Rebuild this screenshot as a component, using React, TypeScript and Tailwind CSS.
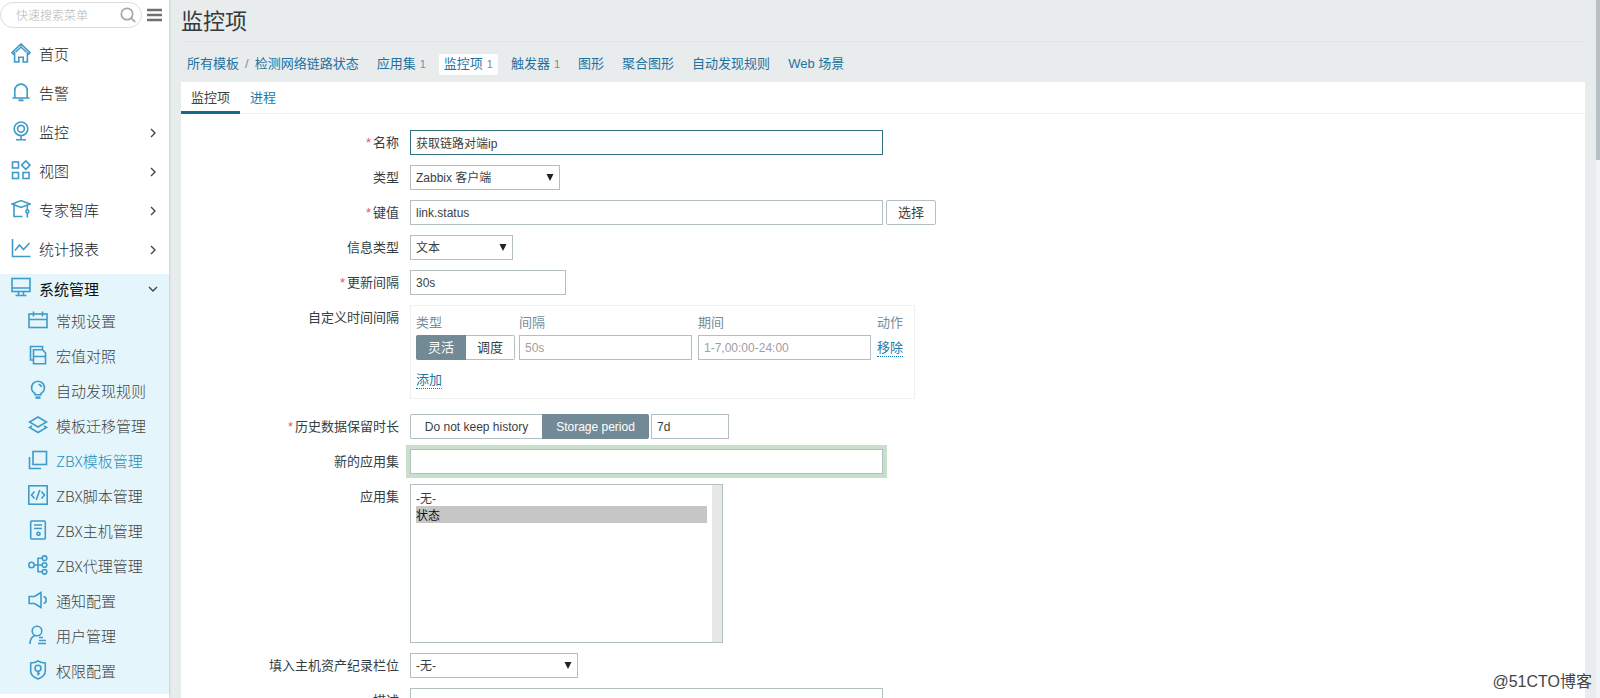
import React from "react";

type NavItem = {
  label: string;
  icon: React.ReactNode;
  expandable?: boolean;
  active?: boolean;
};

type TabItem = {
  label: string;
  count?: number;
  selected?: boolean;
};

// All the sidebar drawings share a 20x20 grid and the same stroke
const Icon = ({ children }: { children: React.ReactNode }) => (
  <svg
    viewBox="0 0 20 20"
    className="mb-1 h-5 w-5 shrink-0 text-[#3f9bc8]"
    fill="none"
    stroke="currentColor"
    strokeWidth="1.6"
    aria-hidden="true"
  >
    {children}
  </svg>
);

const mainItems: NavItem[] = [
  {
    label: "首页",
    icon: (
      <Icon>
        <path d="M1 9.6 10 1l9 8.6-1.3 1.4L16.4 9.8V19h-4.2v-4.800H7.800V19H3.600V9.800L2.300 11z" />
        <path d="M4.800 9 10 4l5.200 5" />
      </Icon>
    ),
  },
  {
    label: "告警",
    icon: (
      <Icon>
        <path d="M1.500 16h17M3.800 16V8.300a6.200 6.200 0 0 1 12.400 0V16" />
        <path d="M7.500 18.300h5" strokeWidth="2" />
      </Icon>
    ),
  },
  {
    label: "监控",
    expandable: true,
    icon: (
      <Icon>
        <circle cx="10" cy="7.800" r="6.800" />
        <circle cx="10" cy="7.800" r="3.400" />
        <path d="M10 14.600V18.500M5 18.700h10" />
      </Icon>
    ),
  },
  {
    label: "视图",
    expandable: true,
    icon: (
      <Icon>
        <rect x="1.500" y="2" width="6" height="6" />
        <path d="M14.800 .9 19 5.100l-4.200 4.200-4.200-4.200z" />
        <rect x="1.500" y="12.500" width="6" height="6" />
        <rect x="12" y="12.500" width="6" height="6" />
      </Icon>
    ),
  },
  {
    label: "专家智库",
    expandable: true,
    icon: (
      <Icon>
        <path d="M1.200 5 10 1.500 18.800 5 10 8.500zM3 6v11.500h8.500M16.300 6v5" />
        <circle cx="16.300" cy="12.500" r="1.500" />
        <path d="M16.300 14v4.500" />
      </Icon>
    ),
  },
  {
    label: "统计报表",
    expandable: true,
    icon: (
      <Icon>
        <path d="M1.500 1v17.500h18" />
        <path d="M4 12.500l4.500-5.500 4 4.500 6-6.500" />
      </Icon>
    ),
  },
];

const systemItems: NavItem[] = [
  {
    label: "常规设置",
    icon: (
      <Icon>
        <rect x="1" y="4" width="18" height="13.500" />
        <path d="M1 9.500h18M5.500 1.500v5M14.500 1.500v5" />
      </Icon>
    ),
  },
  {
    label: "宏值对照",
    icon: (
      <Icon>
        <path d="M5.500 15H2.500V1.500h12v3" />
        <path d="M5.500 4.800h9l3 3v11h-12zM5.500 11.500h12" />
      </Icon>
    ),
  },
  {
    label: "自动发现规则",
    icon: (
      <Icon>
        <path d="M7 14.800v-1.300a6.500 6.500 0 1 1 6 0v1.300z" />
        <path d="M7.500 17.600h5" strokeWidth="2.400" />
        <path d="M10.500 4.200a3.500 3.500 0 0 1 3 3" />
      </Icon>
    ),
  },
  {
    label: "模板迁移管理",
    icon: (
      <Icon>
        <path d="M10 2l8.500 5-8.500 5-8.500-5z" />
        <path d="M4 11l-2.500 1.500L10 17.500l8.500-5L16 11" />
      </Icon>
    ),
  },
  {
    label: "ZBX模板管理",
    active: true,
    icon: (
      <Icon>
        <rect x="5" y="1.500" width="13.500" height="13" />
        <path d="M1.500 7v11.500H13" />
      </Icon>
    ),
  },
  {
    label: "ZBX脚本管理",
    icon: (
      <Icon>
        <rect x=".8" y=".8" width="18.400" height="18.400" />
        <path d="M6.500 6.500 3.500 10l3 3.500M13.500 6.500l3 3.500-3 3.500M11.800 5l-3.600 10" />
      </Icon>
    ),
  },
  {
    label: "ZBX主机管理",
    icon: (
      <Icon>
        <rect x="2.700" y="1" width="14.600" height="18" rx="1" />
        <path d="M6 5h8M6 8.500h8" />
        <circle cx="10.500" cy="13.800" r="1.600" />
      </Icon>
    ),
  },
  {
    label: "ZBX代理管理",
    icon: (
      <Icon>
        <circle cx="3.500" cy="10" r="2.700" />
        <circle cx="16.500" cy="3.200" r="2.300" />
        <circle cx="16.500" cy="10" r="2.300" />
        <circle cx="16.500" cy="16.800" r="2.300" />
        <path d="M6.200 10h8M14.200 3.200H10v13.600h4.200" />
      </Icon>
    ),
  },
  {
    label: "通知配置",
    icon: (
      <Icon>
        <path d="M1.200 6.500h5.300L13 2.500v15l-6.500-4H1.200z" />
        <path d="M15.500 6.500c3.500.5 3.500 6.500 0 7" />
      </Icon>
    ),
  },
  {
    label: "用户管理",
    icon: (
      <Icon>
        <circle cx="9" cy="6" r="4.800" />
        <path d="M2 19c0-4.500 2-7.500 5-8.500M11 12.500h4M11 15.500h7M10 18.500h8" />
      </Icon>
    ),
  },
  {
    label: "权限配置",
    icon: (
      <Icon>
        <path d="M10 1c2.500 1.500 5 2 7.300 2v8c0 4-3.300 6.500-7.300 8-4-1.500-7.300-4-7.300-8V3C5 3 7.500 2.500 10 1z" />
        <circle cx="10" cy="8.300" r="3" />
        <path d="M10 11.300v4.200M10 13.500h2" />
      </Icon>
    ),
  },
];

const templateTabs: TabItem[] = [
  { label: "应用集", count: 1 },
  { label: "监控项", count: 1, selected: true },
  { label: "触发器", count: 1 },
  { label: "图形" },
  { label: "聚合图形" },
  { label: "自动发现规则" },
  { label: "Web 场景" },
];

const fieldClass =
  "block h-[25px] border border-[#b4bfc3] bg-white px-[5px] text-xs text-[#3a3f42] outline-none placeholder:text-[#a0a0a0]";

const Chevron = ({ down = false }: { down?: boolean }) => (
  <svg viewBox="0 0 10 10" className="ml-auto h-2.5 w-2.5" fill="none" stroke="#444" strokeWidth="1.4" aria-hidden="true">
    <path d={down ? "M1 3l4 4 4-4" : "M3 1l4 4-4 4"} />
  </svg>
);

const Sidebar = () => (
  <aside className="z-10 flex w-[169px] shrink-0 flex-col bg-white font-['Noto_Sans_CJK_SC',sans-serif] text-[15px] font-light shadow-[0_0_3px_#b5bfc3]">
    <div className="flex h-[30px] items-center gap-[5px]">
      <div className="flex h-[26px] w-[142px] items-center rounded-full border border-[#dcdcdc] pl-[15px] pr-[5px]">
        <input
          type="text"
          aria-label="快速搜索菜单"
          placeholder="快速搜索菜单"
          className="w-0 flex-1 text-xs outline-none placeholder:text-[#b5b5b5]"
        />
        <svg viewBox="0 0 16 16" className="h-4 w-4" fill="none" stroke="#a8a8a8" strokeWidth="1.700" aria-hidden="true">
          <circle cx="7" cy="7" r="5.700" />
          <path d="M11.200 11.200l4 4" />
        </svg>
      </div>
      <button type="button" aria-label="折叠菜单">
        <svg viewBox="0 0 16 14" className="h-3.5 w-4" stroke="#707070" strokeWidth="2.400" aria-hidden="true">
          <path d="M0 2h15M0 7h15M0 12h15" />
        </svg>
      </button>
    </div>

    <nav className="pt-[5px]">
      {mainItems.map((item) => (
        <a key={item.label} href="#" className="flex h-[39px] items-center gap-2 pl-[11px] pr-[11px] text-[#222]">
          {item.icon}
          {item.label}
          {item.expandable && <Chevron />}
        </a>
      ))}
      <div className="mt-[5px] bg-[#e4f5fc] pb-[5px]">
        <a href="#" className="flex h-[30px] items-center gap-2 pl-[11px] pr-[11px] font-normal text-[#111]">
          <Icon>
            <rect x="1" y="1.500" width="18" height="13" />
            <path d="M1 11h18M7.500 14.500v3.500M12.500 14.500v3.500M4.500 18.500h11" />
          </Icon>
          系统管理
          <Chevron down />
        </a>
        {systemItems.map((item) => (
          <a
            key={item.label}
            href="#"
            className={`flex h-[35px] items-center gap-2 pl-7 ${item.active ? "text-[#1f8fb8]" : "text-[#444]"}`}
          >
            {item.icon}
            {item.label}
          </a>
        ))}
      </div>
    </nav>
  </aside>
);

type RowProps = {
  label: string;
  htmlFor?: string;
  required?: boolean;
  children: React.ReactNode;
};

const FormRow = ({ label, htmlFor, required, children }: RowProps) => (
  <div className="flex items-start gap-[11px]">
    <label htmlFor={htmlFor} className="w-[218px] shrink-0 text-right leading-[25px] text-[#333e44]">
      {required && <span className="mr-0.5 text-[#e45959]">*</span>}
      {label}
    </label>
    {children}
  </div>
);

const Select = ({ id, value, width }: { id: string; value: string; width: string }) => (
  <div className={`relative ${width}`}>
    <select id={id} className={`${fieldClass} w-full appearance-none`}>
      <option>{value}</option>
    </select>
    <svg viewBox="0 0 8 7" className="pointer-events-none absolute right-1.5 top-[9px] h-[7px] w-2" aria-hidden="true">
      <path d="M0.500 0h7L4 7z" fill="#222" />
    </svg>
  </div>
);

const IntervalTable = () => (
  <div className="mb-[5px] h-[94px] border border-[#edf0f1] pl-[5px] pr-[11px] pt-1">
    <table className="border-collapse text-left">
      <thead>
        <tr className="h-[25px] text-[#768d99]">
          <th className="w-[103px] p-0 font-normal">类型</th>
          <th className="w-[179px] p-0 font-normal">间隔</th>
          <th className="w-[179px] p-0 font-normal">期间</th>
          <th className="p-0 font-normal">动作</th>
        </tr>
      </thead>
      <tbody>
        <tr>
          <td className="p-0">
            <div className="flex">
              <button type="button" className="h-[25px] w-[50px] rounded-l-xs bg-[#728a96] text-white">灵活</button>
              <button type="button" className="h-[25px] w-[49px] rounded-r-xs border border-l-0 border-[#b4bfc3]">调度</button>
            </div>
          </td>
          <td className="p-0">
            <input aria-label="间隔" placeholder="50s" className={`${fieldClass} w-[173px]`} />
          </td>
          <td className="p-0">
            <input aria-label="期间" placeholder="1-7,00:00-24:00" className={`${fieldClass} w-[173px]`} />
          </td>
          <td className="p-0">
            <button type="button" className="border-b border-dotted border-[#0275b8] leading-4 text-[#1f78a5]">移除</button>
          </td>
        </tr>
      </tbody>
    </table>
    <button type="button" className="mt-3 border-b border-dotted border-[#0275b8] leading-4 text-[#1f78a5]">添加</button>
  </div>
);

const ItemForm = () => (
  <form className="flex flex-col gap-2.5 pt-4">
    <FormRow label="名称" htmlFor="name" required>
      <input id="name" defaultValue="获取链路对端ip" className="block h-[25px] w-[473px] border border-[#2f6f80] bg-white px-[5px] text-xs text-[#3a3f42] outline-none" />
    </FormRow>
    <FormRow label="类型" htmlFor="type">
      <Select id="type" value="Zabbix 客户端" width="w-[150px]" />
    </FormRow>
    <FormRow label="键值" htmlFor="key" required>
      <div className="flex gap-[3px]">
        <input id="key" defaultValue="link.status" className={`${fieldClass} w-[473px]`} />
        <button type="button" className="h-[25px] w-[50px] rounded-xs border border-[#b4bfc3]">选择</button>
      </div>
    </FormRow>
    <FormRow label="信息类型" htmlFor="value-type">
      <Select id="value-type" value="文本" width="w-[103px]" />
    </FormRow>
    <FormRow label="更新间隔" htmlFor="delay" required>
      <input id="delay" defaultValue="30s" className={`${fieldClass} w-[156px]`} />
    </FormRow>
    <FormRow label="自定义时间间隔">
      <IntervalTable />
    </FormRow>
    <FormRow label="历史数据保留时长" htmlFor="history" required>
      <div className="flex text-xs">
        <button type="button" className="h-[25px] w-[132px] rounded-l-xs border border-r-0 border-[#b4bfc3]">Do not keep history</button>
        <button type="button" className="h-[25px] w-[107px] rounded-r-xs bg-[#728a96] text-white">Storage period</button>
        <input id="history" defaultValue="7d" className={`${fieldClass} ml-0.5 w-[78px]`} />
      </div>
    </FormRow>
    <FormRow label="新的应用集" htmlFor="new-application">
      <input id="new-application" className={`${fieldClass} w-[473px] ring-4 ring-[#c8dfcb]`} />
    </FormRow>
    <FormRow label="应用集" htmlFor="applications">
      <div className="flex h-[159px] w-[313px] border border-[#b4bfc3]">
        <select
          id="applications"
          multiple
          defaultValue={["状态"]}
          className="h-full flex-1 overflow-hidden px-[5px] py-1 text-xs text-[#3a3f42] outline-none"
        >
          <option className="h-[17px] p-0 leading-[17px]">-无-</option>
          <option className="h-[17px] p-0 leading-[17px] checked:bg-[linear-gradient(#c6c6c6,#c6c6c6)]">状态</option>
        </select>
        <div className="w-2.5 bg-[#e6e8e8]" />
      </div>
    </FormRow>
    <FormRow label="填入主机资产纪录栏位" htmlFor="inventory">
      <Select id="inventory" value="-无-" width="w-[168px]" />
    </FormRow>
    <FormRow label="描述" htmlFor="description">
      <textarea id="description" rows={6} className="block w-[473px] resize-none border border-[#b4bfc3] px-[5px] text-xs" />
    </FormRow>
  </form>
);

const App: React.FC = () => {
  return (
    <div className="relative flex h-screen overflow-hidden bg-[#e9eced] font-['Liberation_Sans','Noto_Sans_CJK_SC',sans-serif] text-[13px] text-[#3a3f42]">
      <Sidebar />

      <main className="flex min-w-0 flex-1 flex-col pl-3">
        <h1 className="flex h-[41px] items-center pt-0.5 text-[22px] text-[#33393d]">监控项</h1>

        <div className="flex h-[41px] items-center gap-2 whitespace-nowrap border-t border-[#e1e5e6] pt-1 text-[#1f72a0]">
          <div className="flex gap-[6px] pl-1.5 pr-[5px]">
            <a href="#">所有模板</a>
            <span className="text-[#768d99]">/</span>
            <a href="#">检测网络链路状态</a>
          </div>
          {templateTabs.map((tab) => (
            <a
              key={tab.label}
              href="#"
              className={`flex h-[21px] items-center gap-1 px-[5px] ${tab.selected ? "rounded-xs bg-white" : ""}`}
            >
              {tab.label}
              {tab.count && <span className="text-[11px] text-[#768d99]">{tab.count}</span>}
            </a>
          ))}
        </div>

        <section className="min-h-0 flex-1 overflow-hidden bg-white">
          <div className="flex h-8 border-b border-[#eff1f2]">
            <a href="#" className="flex h-8 items-center border-b-3 border-[#17698c] px-2.5 pt-0.5 text-[#3a3f42]">监控项</a>
            <a href="#" className="flex h-8 items-center border-b-3 border-transparent px-2.5 pt-0.5 text-[#1f78a5]">进程</a>
          </div>
          <ItemForm />
        </section>
      </main>

      {/* page scrollbar */}
      <div className="ml-[11px] w-1 bg-[#f0f4f7]">
        <div className="h-40 bg-[#b9c0c3]" />
      </div>

      <span className="absolute bottom-1.5 right-2 text-base leading-5 text-[#444]">@51CTO博客</span>
    </div>
  );
};

export default App;
